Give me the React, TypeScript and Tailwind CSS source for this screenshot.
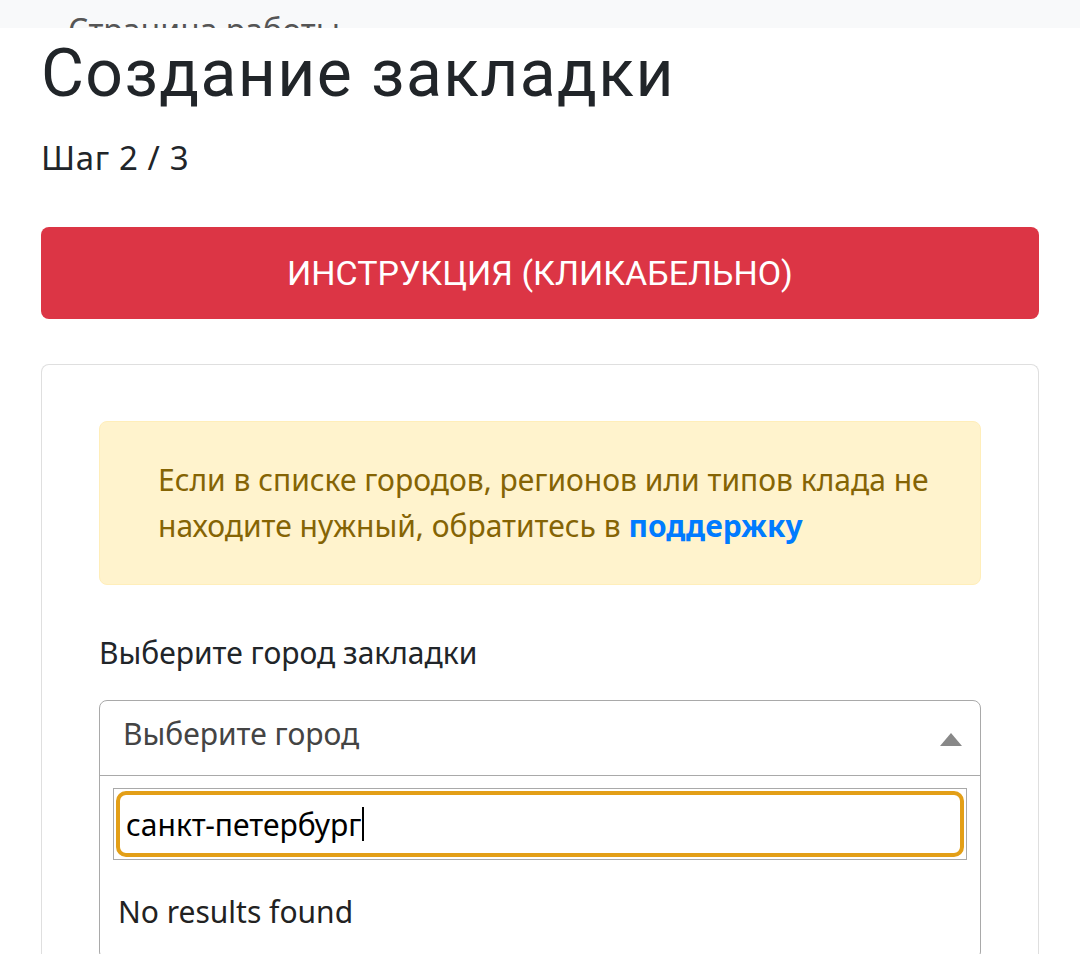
import React from 'react';

const App: React.FC = () => {
  return (
    <div className="min-h-[954px] bg-white font-['Noto_Sans','Roboto',sans-serif] text-[#212529]">
      {/* top nav, mostly hidden under the page */}
      <div className="h-[28px] overflow-hidden bg-[#f8f9fa]">
        <div className="pl-[68px] pt-[14px] text-[32px] leading-none text-[#555]">Страница работы</div>
      </div>

      <div className="px-[41px]">
        <h1 className="mt-[13px] font-['Roboto',sans-serif] text-[66px] leading-none font-normal tracking-[1.4px]">Создание закладки</h1>
        <p className="mt-[34px] text-[33px] leading-none tracking-[0.6px]">Шаг 2 / 3</p>

        <button
          type="button"
          className="mt-[53px] flex h-[92px] w-full items-center justify-center rounded-[8px] bg-[#dc3545] font-['Roboto',sans-serif] text-[34px] text-white"
        >
          ИНСТРУКЦИЯ (КЛИКАБЕЛЬНО)
        </button>

        <div className="mt-[45px] rounded-t-[8px] border border-b-0 border-[#dfdfdf] px-[57px] pt-[56px]">
          {/* alert */}
          <div className="rounded-[8px] border border-[#ffeeba] bg-[#fff3cd] pb-[35px] pl-[58px] pr-[24px] pt-[35px] text-[30px] leading-[46px] text-[#856404]">
            Если в списке городов, регионов или типов клада не находите нужный, обратитесь в{' '}
            <a href="#" className="font-bold text-[#007bff]">поддержку</a>
          </div>

          <label className="mt-[47px] block text-[30px] leading-[42px]">Выберите город закладки</label>

          {/* open select */}
          <div className="mt-[26px] rounded-[8px] border border-[#a9a9a9]">
            <div className="flex h-[74px] items-start justify-between pl-[23px] pr-[18px] pt-[12px]">
              <span className="text-[30px] leading-[42px] text-[#444]">Выберите город</span>
              <svg className="mt-[20px]" width="22" height="13" viewBox="0 0 22 13">
                <polygon points="0,13 22,13 11,0" fill="#888" />
              </svg>
            </div>
            <div className="border-t border-[#a9a9a9] px-[13px] pt-[12px]">
              <div className="border border-[#a9a9a9] p-[2px]">
                <div className="flex h-[66px] items-center rounded-[10px] border-4 border-[#e39f17] px-[6px] text-[30px] text-black">
                  санкт-петербург
                  <span className="ml-[1px] inline-block h-[34px] w-[2px] bg-black" />
                </div>
              </div>
              <div className="pb-[26px] pl-[5px] pt-[31px] text-[30px] leading-[42px] text-[#222]">No results found</div>
            </div>
          </div>
        </div>
      </div>
    </div>
  );
};

export default App;
